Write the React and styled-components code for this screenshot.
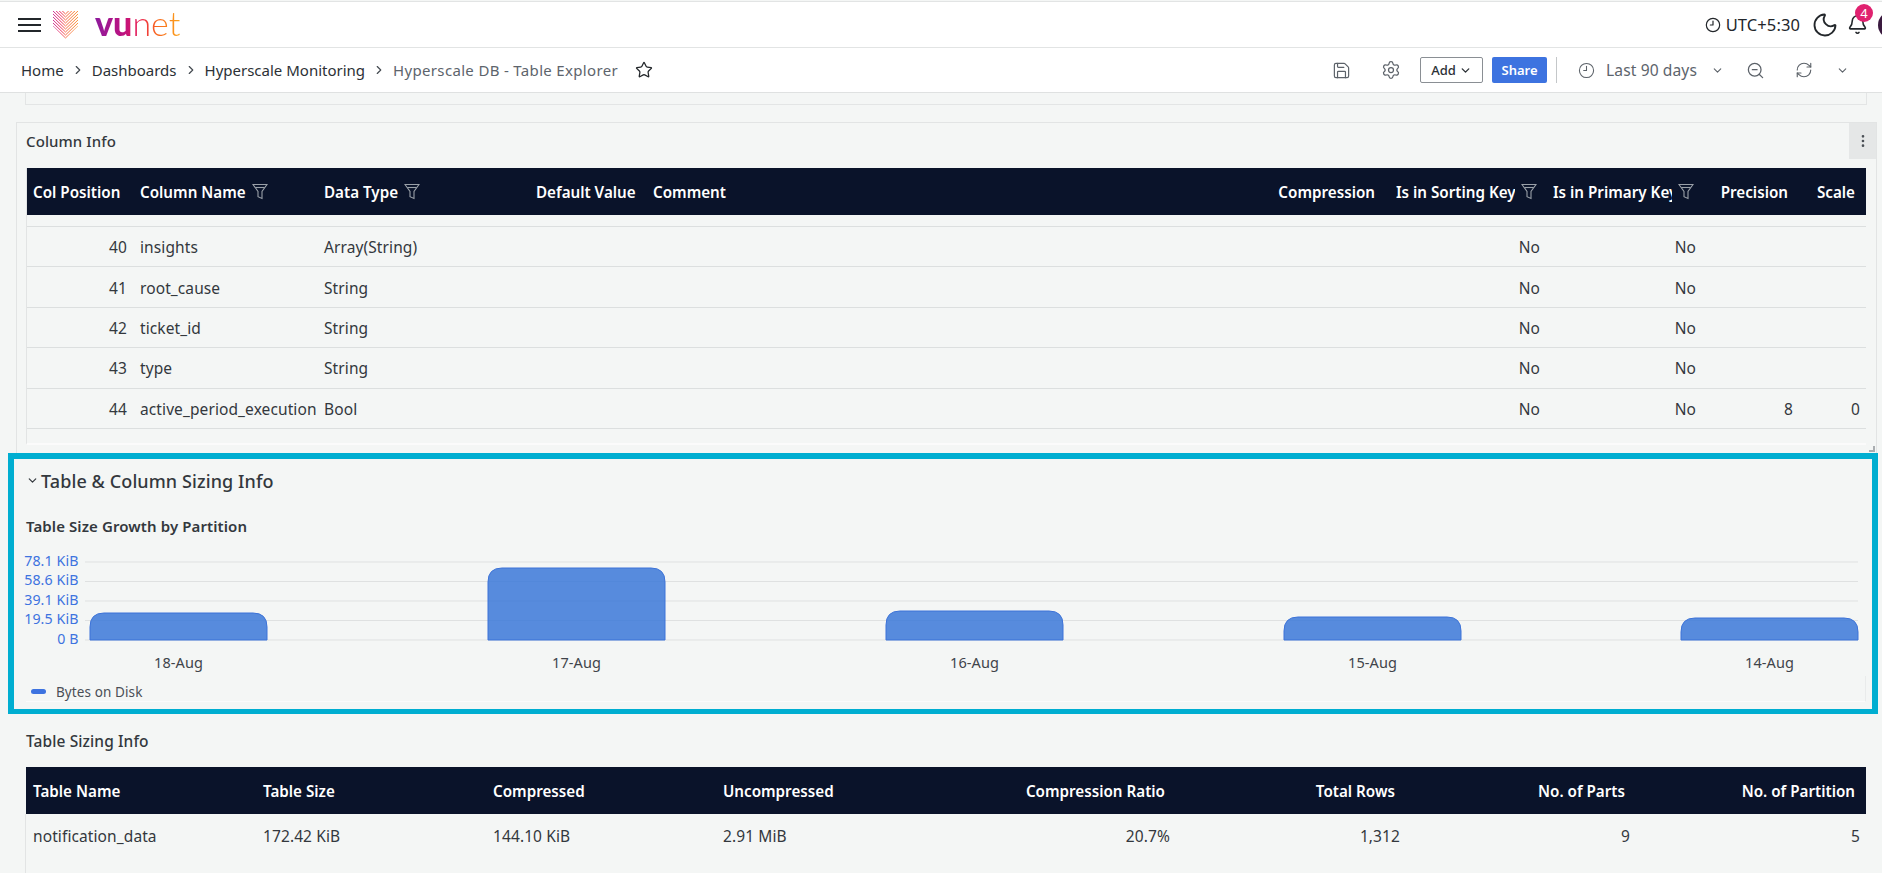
import React from 'react';
import styled, { createGlobalStyle } from 'styled-components';
import {
  Bell,
  ChevronDown,
  ChevronRight,
  Clock9,
  EllipsisVertical,
  Moon,
  RefreshCw,
  Save,
  Settings,
  Star,
  ZoomOut,
} from 'lucide-react';

const columnInfoGrid = '107px 184px 212px 117px 626px 117px 157px 156px 97px 67px';

const columnHeaders = [
  { label: 'Col Position' },
  { label: 'Column Name', filter: true },
  { label: 'Data Type', filter: true },
  { label: 'Default Value' },
  { label: 'Comment' },
  { label: 'Compression', right: true, pad: 14 },
  { label: 'Is in Sorting Key', filter: true },
  { label: 'Is in Primary Key', filter: true },
  { label: 'Precision', right: true },
  { label: 'Scale', right: true },
];

const columnRows = [
  { pos: 40, name: 'insights', type: 'Array(String)' },
  { pos: 41, name: 'root_cause', type: 'String' },
  { pos: 42, name: 'ticket_id', type: 'String' },
  { pos: 43, name: 'type', type: 'String' },
  { pos: 44, name: 'active_period_execution', type: 'Bool', precision: 8, scale: 0 },
  { pos: 45, name: 'is_period_enabled', type: 'Bool', precision: 8, scale: 0 },
];

const sizingHeaders = [
  'Table Name',
  'Table Size',
  'Compressed',
  'Uncompressed',
  'Compression Ratio',
  'Total Rows',
  'No. of Parts',
  'No. of Partition',
];

const sizingValues = ['notification_data', '172.42 KiB', '144.10 KiB', '2.91 MiB', '20.7%', '1,312', '9', '5'];

const yTicks = [
  { label: '78.1 KiB', y: 16 },
  { label: '58.6 KiB', y: 35.5 },
  { label: '39.1 KiB', y: 55 },
  { label: '19.5 KiB', y: 74.5 },
  { label: '0 B', y: 94 },
];

const bars = [
  { label: '18-Aug', x: 64, top: 67 },
  { label: '17-Aug', x: 462, top: 22 },
  { label: '16-Aug', x: 860, top: 65 },
  { label: '15-Aug', x: 1258, top: 71 },
  { label: '14-Aug', x: 1655, top: 72 },
];

const GlobalStyle = createGlobalStyle`
  html, body {
    margin: 0;
    padding: 0;
    background: #f4f6f5;
  }
  * {
    box-sizing: border-box;
  }
`;

const Page = styled.div`
  width: 1882px;
  height: 873px;
  overflow: hidden;
  display: flex;
  flex-direction: column;
  background: #f4f6f5;
  color: #33383d;
  font-family: 'Noto Sans', 'Liberation Sans', sans-serif;
  font-size: 15.5px;
  letter-spacing: 0.1px;
`;

const TopBar = styled.header`
  height: 47px;
  margin-top: 1px;
  padding-left: 18px;
  flex-shrink: 0;
  display: flex;
  align-items: center;
  background: #fff;
  border-top: 1px solid #e2e4e4;
  border-bottom: 1px solid #e2e4e4;
`;

const Hamburger = styled.div`
  width: 23px;
  height: 14px;
  margin-right: 12px;
  border-top: 2px solid #23272b;
  border-bottom: 2px solid #23272b;
  position: relative;

  &::after {
    content: '';
    position: absolute;
    left: 0;
    right: 0;
    top: 4px;
    height: 2px;
    background: #23272b;
  }
`;

const LogoText = styled.div`
  margin-left: 17px;
  margin-top: -4px;
  font-family: Lato, sans-serif;
  font-size: 34px;
  line-height: 36px;
  font-weight: 300;
  letter-spacing: 0;
  background: linear-gradient(90deg, #8d1a9c 0%, #c0127f 35%, #ea1d50 52%, #f8651f 72%, #fca31a 100%);
  -webkit-background-clip: text;
  background-clip: text;
  color: transparent;

  b {
    font-weight: 900;
  }
`;

const TopRight = styled.div`
  margin-left: auto;
  margin-right: -24px;
  display: flex;
  align-items: center;
`;

const ZoneLabel = styled.span`
  margin-left: 5px;
  margin-right: 11px;
  font-size: 16.5px;
  color: #23272b;
`;

const BellWrap = styled.div`
  position: relative;
  display: flex;
  margin-left: 8px;
  margin-right: 10px;
  color: #23272b;
`;

const Badge = styled.span`
  position: absolute;
  top: -10px;
  right: -5px;
  width: 18px;
  height: 18px;
  border-radius: 50%;
  background: #e0216f;
  color: #fff;
  font-size: 13px;
  line-height: 18px;
  text-align: center;
`;

const Avatar = styled.div`
  width: 28px;
  height: 28px;
  border-radius: 50%;
  background: #3a1a3f;
`;

const CrumbBar = styled.div`
  height: 45px;
  padding: 0 33px 0 21px;
  flex-shrink: 0;
  display: flex;
  align-items: center;
  background: #fff;
  border-bottom: 1px solid #dfe1e1;
`;

const Crumb = styled.span`
  font-size: 15px;
  letter-spacing: ${(p) => (p.$current ? '0.33px' : '0')};
  color: ${(p) => (p.$current ? '#5d646c' : '#2c3136')};
`;

const CrumbSep = styled(ChevronRight)`
  margin: 0 7px;
  color: #444a50;
`;

const FavStar = styled(Star)`
  margin-left: 17px;
  color: #23272b;
`;

const Actions = styled.div`
  margin-left: auto;
  display: flex;
  align-items: center;
  color: #5c6269;
`;

const ActionIcon = styled.span`
  display: flex;
  margin-left: ${(p) => p.$gap}px;
`;

const AddButton = styled.button`
  width: 63px;
  height: 26px;
  margin-left: 19px;
  padding: 0;
  display: flex;
  align-items: center;
  justify-content: center;
  gap: 3px;
  background: #fff;
  border: 1px solid #8a8f94;
  border-radius: 2px;
  color: #2c3136;
  font: 500 13px 'Noto Sans', sans-serif;
`;

const ShareButton = styled.button`
  width: 55px;
  height: 26px;
  margin-left: 9px;
  padding: 0;
  background: #3d73e0;
  border: none;
  border-radius: 2px;
  color: #fff;
  font: 600 13px 'Noto Sans', sans-serif;
`;

const Divider = styled.span`
  width: 1px;
  height: 26px;
  margin: 0 21px 0 9px;
  background: #c4c7c9;
`;

const RangeLabel = styled.span`
  margin-left: 11px;
  font-size: 15.6px;
  color: #5d646c;
`;

const Stub = styled.div`
  width: 1842px;
  height: 12px;
  margin-left: 25px;
  flex-shrink: 0;
  border: 1px solid #e3e5e5;
  border-top: none;
`;

const ColumnPanel = styled.section`
  position: relative;
  width: 1861px;
  height: 331px;
  margin: 17px 0 0 16px;
  padding: 0 10px 0 9px;
  flex-shrink: 0;
  border: 1px solid #e2e4e4;
  border-bottom: none;
`;

const PanelTitle = styled.div`
  height: 45px;
  padding-bottom: 9px;
  display: flex;
  align-items: center;
  font-size: 15px;
  font-weight: 500;
  color: #33383d;
`;

const Kebab = styled.div`
  position: absolute;
  top: 0;
  right: 0;
  width: 27px;
  height: 36px;
  display: flex;
  align-items: center;
  justify-content: center;
  background: #e5e7e7;
  color: #4a4f55;
`;

const TableClip = styled.div`
  height: 277px;
  overflow: hidden;
  border-left: 1px solid #e2e4e4;
  border-bottom: 2px solid #fbfbfb;
`;

const ColumnHead = styled.div`
  display: grid;
  grid-template-columns: ${columnInfoGrid};
  height: 47px;
  margin-left: -1px;
  align-items: center;
  background: #0a132a;
  color: #fff;
  font-size: 15.2px;
  font-weight: 600;
  letter-spacing: 0;
`;

const HeadCell = styled.div`
  display: flex;
  align-items: center;
  justify-content: ${(p) => (p.$right ? 'flex-end' : 'flex-start')};
  padding: 0 ${(p) => p.$pad}px 0 7px;
  min-width: 0;
`;

const HeadLabel = styled.span`
  white-space: nowrap;
  flex-shrink: 0;
`;

const FilterLabel = styled(HeadLabel)`
  overflow: hidden;
  max-width: 119px;
`;

const FilterIcon = styled.svg`
  width: 16px;
  height: 17px;
  margin-left: 6px;
  flex-shrink: 0;
`;

const Spacer = styled.div`
  height: 12px;
  border-bottom: 1px solid #dcdfdf;
`;

const ColumnRow = styled.div`
  display: grid;
  grid-template-columns: ${columnInfoGrid};
  height: 40.4px;
  align-items: center;
  border-bottom: 1px solid #dcdfdf;
`;

const Cell = styled.div`
  padding: 1px 7px 0 6px;
  text-align: ${(p) => (p.$right ? 'right' : 'left')};
  white-space: nowrap;
`;

const ResizeHandle = styled.span`
  position: absolute;
  right: 1px;
  bottom: 1px;
  width: 6px;
  height: 6px;
  border-right: 2px solid #a9adb0;
  border-bottom: 2px solid #a9adb0;
`;

const Highlight = styled.section`
  width: 1870px;
  height: 261px;
  margin-left: 8px;
  padding: 0 6px 0 12px;
  flex-shrink: 0;
  border: 6px solid #00aed1;
  border-bottom-width: 5px;
`;

const SectionTitle = styled.div`
  height: 43px;
  display: flex;
  align-items: center;
  gap: 2px;
  font-size: 18px;
  font-weight: 500;
  color: #33383d;
`;

const ChartTitle = styled.div`
  height: 20px;
  margin-top: 14px;
  line-height: 20px;
  font-size: 15px;
  font-weight: 600;
  color: #33383d;
`;

const ChartSvg = styled.svg`
  display: block;
  width: 1840px;
  height: 130px;
  margin-top: 10px;
  overflow: visible;
`;

const LegendRow = styled.div`
  width: 1840px;
  height: 26px;
  padding: 6px 0 0 5px;
  display: flex;
  align-items: center;
  gap: 10px;
  font-size: 13.5px;
  color: #4a4f55;
  border-right: 1px solid #e9ebeb;
  border-bottom: 1px solid #fbfbfb;
`;

const LegendSwatch = styled.span`
  width: 15px;
  height: 5px;
  border-radius: 3px;
  background: #3d73e0;
`;

const SizingSection = styled.section`
  flex: 1;
  padding: 15px 16px 0 25px;
  display: flex;
  flex-direction: column;
`;

const SizingTitle = styled.div`
  height: 24px;
  margin-bottom: 14px;
  padding-left: 1px;
  line-height: 24px;
  font-weight: 500;
  color: #33383d;
`;

const SizingHead = styled.div`
  display: grid;
  grid-template-columns: repeat(8, 230px);
  height: 47px;
  margin-left: 1px;
  flex-shrink: 0;
  align-items: center;
  background: #0a132a;
  color: #fff;
  font-size: 15.2px;
  font-weight: 600;
  letter-spacing: 0;
`;

const SizingHeadCell = styled.div`
  padding: 0 11px 0 7px;
  text-align: ${(p) => (p.$right ? 'right' : 'left')};
`;

const SizingBody = styled.div`
  flex: 1;
  padding-top: 12px;
  display: grid;
  grid-template-columns: repeat(8, 230px);
  align-content: start;
  border-left: 1px solid #e2e4e4;
`;

const SizingCell = styled.div`
  padding: 0 6px 0 7px;
  line-height: 20px;
  text-align: ${(p) => (p.$right ? 'right' : 'left')};
`;

const VunetMark = () => (
  <svg width="25" height="28" viewBox="0 0 25 28">
    <defs>
      <linearGradient id="markStroke" x1="0" y1="0" x2="1" y2="0.3">
        <stop offset="0" stopColor="#c6309a" />
        <stop offset="0.5" stopColor="#ef3361" />
        <stop offset="1" stopColor="#fca72c" />
      </linearGradient>
      <clipPath id="markClip">
        <polygon points="0,0 25,0 25,15 12.5,28 0,15" />
      </clipPath>
    </defs>
    <g clipPath="url(#markClip)" fill="none" stroke="url(#markStroke)" strokeWidth="1">
      {[-9, -6, -3, 0, 3, 6, 9, 12, 15].map((y) => (
        <polyline key={y} points={`-1,${y - 1} 12.5,${y + 12} 26,${y - 1}`} />
      ))}
    </g>
  </svg>
);

const Filter = () => (
  <FilterIcon viewBox="0 0 16 17" fill="none" stroke="#9aa0a8" strokeWidth="1.1">
    <path d="M1 1.5h14L10 8.5v7l-4-1.8V8.5z" />
    <path d="M3.5 4.5h9" />
  </FilterIcon>
);

const GrowthChart = () => (
  <ChartSvg viewBox="0 0 1840 130">
    {yTicks.map((tick) => (
      <g key={tick.label}>
        <line x1="59" x2="1832" y1={tick.y} y2={tick.y} stroke="#dfe1e1" />
        <text x="52.5" y={tick.y + 3.5} textAnchor="end" fontSize="14.2" fill="#3d73e0">
          {tick.label}
        </text>
      </g>
    ))}
    {bars.map((bar) => {
      const r = Math.min(14, 94 - bar.top);
      return (
        <g key={bar.label}>
          <path
            d={`M${bar.x} 94V${bar.top + r}Q${bar.x} ${bar.top} ${bar.x + r} ${bar.top}H${bar.x + 177 - r}Q${bar.x + 177} ${bar.top} ${bar.x + 177} ${bar.top + r}V94Z`}
            fill="#3b78d8"
            fillOpacity="0.85"
            stroke="#3d73d8"
          />
          <text x={bar.x + 88.5} y="122" textAnchor="middle" fontSize="14.5" fill="#3f444a">
            {bar.label}
          </text>
        </g>
      );
    })}
  </ChartSvg>
);

const App = () => (
  <Page>
    <GlobalStyle />
    <TopBar>
      <Hamburger />
      <VunetMark />
      <LogoText>
        <b>vu</b>net
      </LogoText>
      <TopRight>
        <Clock9 size={16} color="#23272b" strokeWidth={1.8} />
        <ZoneLabel>UTC+5:30</ZoneLabel>
        <Moon size={28} color="#23272b" strokeWidth={1.6} />
        <BellWrap>
          <Bell size={21} strokeWidth={1.8} />
          <Badge>4</Badge>
        </BellWrap>
        <Avatar />
      </TopRight>
    </TopBar>

    <CrumbBar>
      <Crumb>Home</Crumb>
      <CrumbSep size={14} />
      <Crumb>Dashboards</Crumb>
      <CrumbSep size={14} />
      <Crumb>Hyperscale Monitoring</Crumb>
      <CrumbSep size={14} />
      <Crumb $current>Hyperscale DB - Table Explorer</Crumb>
      <FavStar size={18} strokeWidth={1.7} />
      <Actions>
        <ActionIcon $gap={0}>
          <Save size={19} strokeWidth={1.5} />
        </ActionIcon>
        <ActionIcon $gap={30}>
          <Settings size={20} strokeWidth={1.5} />
        </ActionIcon>
        <AddButton>
          Add <ChevronDown size={13} strokeWidth={2.5} />
        </AddButton>
        <ShareButton>Share</ShareButton>
        <Divider />
        <Clock9 size={17} strokeWidth={1.5} />
        <RangeLabel>Last 90 days</RangeLabel>
        <ActionIcon $gap={14}>
          <ChevronDown size={13} />
        </ActionIcon>
        <ActionIcon $gap={22}>
          <ZoomOut size={19} strokeWidth={1.6} />
        </ActionIcon>
        <ActionIcon $gap={30}>
          <RefreshCw size={18} strokeWidth={1.5} />
        </ActionIcon>
        <ActionIcon $gap={23}>
          <ChevronDown size={13} />
        </ActionIcon>
      </Actions>
    </CrumbBar>

    <Stub />

    <ColumnPanel>
      <PanelTitle>Column Info</PanelTitle>
      <Kebab>
        <EllipsisVertical size={16} />
      </Kebab>
      <TableClip>
        <ColumnHead>
          {columnHeaders.map((col) => (
            <HeadCell key={col.label} $right={col.right} $pad={col.pad || (col.right ? 11 : 7)}>
              {col.filter ? <FilterLabel>{col.label}</FilterLabel> : <HeadLabel>{col.label}</HeadLabel>}
              {col.filter && <Filter />}
            </HeadCell>
          ))}
        </ColumnHead>
        <Spacer />
        {columnRows.map((row) => (
          <ColumnRow key={row.pos}>
            <Cell $right>{row.pos}</Cell>
            <Cell>{row.name}</Cell>
            <Cell>{row.type}</Cell>
            <Cell />
            <Cell />
            <Cell />
            <Cell $right>No</Cell>
            <Cell $right>No</Cell>
            <Cell $right>{row.precision}</Cell>
            <Cell $right>{row.scale}</Cell>
          </ColumnRow>
        ))}
      </TableClip>
      <ResizeHandle />
    </ColumnPanel>

    <Highlight>
      <SectionTitle>
        <ChevronDown size={13} strokeWidth={2.2} />
        Table &amp; Column Sizing Info
      </SectionTitle>
      <ChartTitle>Table Size Growth by Partition</ChartTitle>
      <GrowthChart />
      <LegendRow>
        <LegendSwatch />
        Bytes on Disk
      </LegendRow>
    </Highlight>

    <SizingSection>
      <SizingTitle>Table Sizing Info</SizingTitle>
      <SizingHead>
        {sizingHeaders.map((label, i) => (
          <SizingHeadCell key={label} $right={i > 3}>
            {label}
          </SizingHeadCell>
        ))}
      </SizingHead>
      <SizingBody>
        {sizingValues.map((value, i) => (
          <SizingCell key={value} $right={i > 3}>
            {value}
          </SizingCell>
        ))}
      </SizingBody>
    </SizingSection>
  </Page>
);

export default App;
